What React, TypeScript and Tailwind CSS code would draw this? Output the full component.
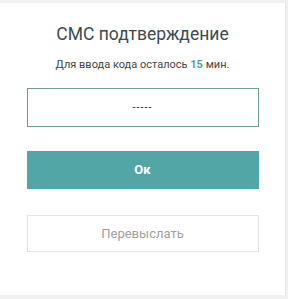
import React from "react";

export default function App() {
  return (
    <div className="w-[288px] h-[299px] bg-[#f1f1f1] pt-[3px] pb-[4px] pr-[2px]" style={{ fontFamily: "Roboto, 'Noto Sans', sans-serif" }}>
      <div className="h-full bg-white border-r border-[#e6e6e6] flex flex-col items-center">
        <h1 className="mt-[19px] text-[17.5px] leading-[24px] text-[#3a4b52]">СМС подтверждение</h1>
        <p className="mt-[12px] text-[11px] leading-[14px] text-[#444]">
          Для ввода кода осталось <span className="font-bold text-[#4e9f9c]">15</span> мин.
        </p>
        <div className="mt-[16px] w-[232px] h-[39px] border border-[#6a9e9c] flex items-center justify-center">
          <span className="text-[11px] tracking-[1px] text-[#333] leading-none">-----</span>
        </div>
        <button className="mt-[24px] w-[232px] h-[38px] bg-[#52a6a5] text-white text-[13px] font-bold">Ок</button>
        <button className="mt-[26px] w-[232px] h-[37px] border border-[#e4e4e4] bg-white text-[#a0a0a0] text-[13px]">Перевыслать</button>
      </div>
    </div>
  );
}
